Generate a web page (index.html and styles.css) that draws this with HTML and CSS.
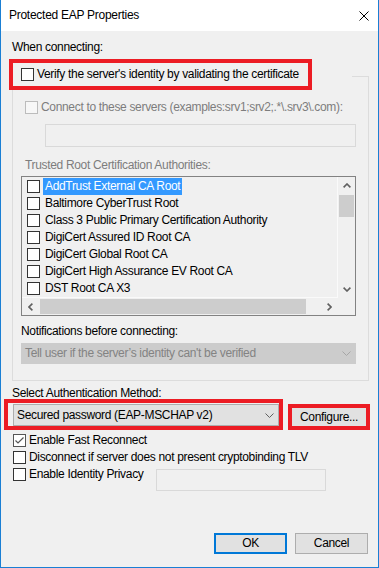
FILE: index.html
```html
<!DOCTYPE html>
<html lang="en">
<head>
<meta charset="utf-8">
<title>Protected EAP Properties</title>
<link rel="stylesheet" href="styles.css">
</head>
<body>
<div class="window">
  <div class="titlebar">
    <span class="title">Protected EAP Properties</span>
    <svg class="close" width="10" height="10" viewBox="0 0 10 10"><path d="M0.5 0.5L9.5 9.5M9.5 0.5L0.5 9.5" fill="none" stroke="#000" stroke-width="1"/></svg>
  </div>
  <div class="client">
    <div class="label">When connecting:</div>
    <div class="group">
      <div class="group-head">
        <div class="mark mark-verify">
          <span class="cb"></span><span class="txt">Verify the server's identity by validating the certificate</span>
        </div>
      </div>
      <div class="row connect disabled"><span class="cb cb-dis"></span><span class="txt">Connect to these servers (examples:srv1;srv2;.*\.srv3\.com):</span></div>
      <div class="textbox servers"></div>
      <div class="label disabled trusted">Trusted Root Certification Authorities:</div>
      <div class="listbox">
        <div class="list-rows">
          <div class="item"><span class="cb"></span><span class="item-text selected">AddTrust External CA Root</span></div>
          <div class="item"><span class="cb"></span><span class="item-text">Baltimore CyberTrust Root</span></div>
          <div class="item"><span class="cb"></span><span class="item-text">Class 3 Public Primary Certification Authority</span></div>
          <div class="item"><span class="cb"></span><span class="item-text">DigiCert Assured ID Root CA</span></div>
          <div class="item"><span class="cb"></span><span class="item-text">DigiCert Global Root CA</span></div>
          <div class="item"><span class="cb"></span><span class="item-text">DigiCert High Assurance EV Root CA</span></div>
          <div class="item"><span class="cb"></span><span class="item-text">DST Root CA X3</span></div>
        </div>
        <div class="vscroll">
          <div class="arrow"><svg width="8" height="5" viewBox="0 0 8 5"><path d="M0.6 4.4L4 1L7.4 4.4" fill="none" stroke="#606060" stroke-width="1.6"/></svg></div>
          <div class="vthumb"></div>
          <div class="spacer"></div>
          <div class="arrow"><svg width="8" height="5" viewBox="0 0 8 5"><path d="M0.6 0.6L4 4L7.4 0.6" fill="none" stroke="#606060" stroke-width="1.6"/></svg></div>
        </div>
        <div class="hscroll">
          <div class="arrow"><svg width="5" height="8" viewBox="0 0 5 8"><path d="M4.4 0.6L1 4L4.4 7.4" fill="none" stroke="#606060" stroke-width="1.6"/></svg></div>
          <div class="hthumb"></div>
          <div class="spacer"></div>
          <div class="arrow"><svg width="5" height="8" viewBox="0 0 5 8"><path d="M0.6 0.6L4 4L0.6 7.4" fill="none" stroke="#606060" stroke-width="1.6"/></svg></div>
        </div>
        <div class="corner"></div>
      </div>
      <div class="label notif">Notifications before connecting:</div>
      <div class="combo combo-dis">
        <span class="txt">Tell user if the server’s identity can't be verified</span>
        <svg width="9" height="5" viewBox="0 0 9 5"><path d="M0.5 0.5L4.5 4.5L8.5 0.5" fill="none" stroke="#a6a6a6" stroke-width="1"/></svg>
      </div>
    </div>
    <div class="label auth-label">Select Authentication Method:</div>
    <div class="auth-row">
      <div class="mark mark-method">
        <div class="combo combo-auth">
          <span class="txt">Secured password (EAP-MSCHAP v2)</span>
          <svg width="9" height="5" viewBox="0 0 9 5"><path d="M0.5 0.5L4.5 4.5L8.5 0.5" fill="none" stroke="#606060" stroke-width="1"/></svg>
        </div>
      </div>
      <div class="mark mark-config">
        <div class="btn-config">Configure...</div>
      </div>
    </div>
    <div class="checks">
      <div class="crow"><span class="cb cb-checked"><svg width="11" height="11" viewBox="0 0 11 11"><path d="M1.5 5.5L4 8L9.5 2.5" fill="none" stroke="#555" stroke-width="1.2"/></svg></span><span class="txt">Enable Fast Reconnect</span></div>
      <div class="crow"><span class="cb"></span><span class="txt">Disconnect if server does not present cryptobinding TLV</span></div>
      <div class="crow crow-privacy">
        <span class="crow-label"><span class="cb"></span><span class="txt">Enable Identity Privacy</span></span>
        <span class="textbox identity"></span>
      </div>
    </div>
    <div class="buttons">
      <div class="btn btn-ok">OK</div>
      <div class="btn">Cancel</div>
    </div>
  </div>
</div>
</body>
</html>
```
FILE: styles.css
```css
* { box-sizing: border-box; }
html, body { margin: 0; padding: 0; background: #fff; }
body {
  font-family: "Liberation Sans", Arial, sans-serif;
  font-size: 12px;
  line-height: 15px;
  letter-spacing: -0.33px;
  color: #000;
}
.window {
  width: 379px;
  height: 568px;
  border: 1px solid #1a7fd4;
  border-top: none;
  display: flex;
  flex-direction: column;
  background: #f0f0f0;
}
.titlebar {
  height: 31px;
  flex: none;
  background: #fff;
  display: flex;
  align-items: center;
  justify-content: space-between;
  padding: 0 9px 0 8px;
}
.title { white-space: nowrap; letter-spacing: -0.27px; }
.close { display: block; }
.client {
  flex: 1;
  display: flex;
  flex-direction: column;
  padding: 9px 9px 13px 11px;
}
.label { height: 15px; white-space: nowrap; }
.disabled { color: #7d7d7d; }
.txt { white-space: nowrap; }

.cb {
  width: 13px;
  height: 13px;
  flex: none;
  border: 1px solid #333;
  background: #fff;
  display: flex;
  align-items: center;
  justify-content: center;
}
.cb-dis { border-color: #bcbcbc; background: #f7f7f7; }
.cb-checked { border-color: #555; }
.cb svg { display: block; }

.group {
  margin-top: 21px;
  width: 357px;
  border: 1px solid #dcdcdc;
  padding: 0 12px 16px 8px;
}
.group-head {
  width: 343px;
  height: 31px;
  margin: -18px 0 0 -12px;
  background: #f0f0f0;
  display: flex;
}
.mark { border: 4px solid #ec1c24; flex: none; }
.mark-verify {
  width: 303px;
  height: 31px;
  display: flex;
  align-items: center;
  gap: 3px;
  padding-left: 8px;
}
.row { display: flex; align-items: center; gap: 3px; height: 15px; }
.connect { margin: 10px 0 0 4px; }
.textbox { border: 1px solid #d9d9d9; background: #f0f0f0; }
.servers { margin: 9px 0 0 24px; width: 311px; height: 23px; }
.trusted { margin: 11px 0 0 4px; }

.listbox {
  margin-top: 3px;
  width: 335px;
  height: 140px;
  border: 1px solid #828282;
  display: grid;
  grid-template-columns: 1fr 17px;
  grid-template-rows: 1fr 17px;
}
.list-rows {
  padding-top: 1px;
  border-right: 1px solid #fafafa;
  border-bottom: 1px solid #fafafa;
  overflow: hidden;
}
.item { height: 17px; display: flex; align-items: center; padding-left: 5px; }
.item-text { margin-left: 3px; padding: 0 2px; line-height: 17px; white-space: nowrap; }
.selected { background: #3399ff; color: #fff; }
.vscroll { display: flex; flex-direction: column; }
.arrow { width: 17px; height: 17px; flex: none; display: flex; align-items: center; justify-content: center; }
.arrow svg { display: block; }
.vthumb { margin: 1px 1px 0; height: 22px; background: #cdcdcd; }
.spacer { flex: 1; }
.hscroll { display: flex; }
.hthumb { margin: 1px 0 1px 1px; width: 266px; background: #cdcdcd; }
.corner { background: #f0f0f0; }

.notif { margin-top: 8px; }
.combo {
  display: flex;
  align-items: center;
  justify-content: space-between;
  white-space: nowrap;
}
.combo svg { display: block; flex: none; }
.combo-dis {
  margin-top: 4px;
  height: 21px;
  border: 1px solid #cccccc;
  background: #cccccc;
  color: #838383;
  padding: 0 4px 0 3px;
}

.auth-label { margin-top: 5px; }
.auth-row { display: flex; align-items: flex-start; margin: -2px 0 0 -8px; }
.mark-method { width: 279px; height: 31px; padding: 1px 0 0 5px; }
.combo-auth {
  width: 266px;
  height: 22px;
  border: 1px solid #adadad;
  background: #e1e1e1;
  padding: 0 4px 0 3px;
}
.mark-config { margin: 5px 0 0 5px; width: 82px; height: 26px; }
.btn-config {
  height: 100%;
  background: #e1e1e1;
  display: flex;
  align-items: center;
  justify-content: center;
  white-space: nowrap;
}

.checks { margin: 2px 0 0 1px; }
.crow { display: flex; align-items: center; gap: 3px; height: 17px; }
.crow-privacy { align-items: flex-start; gap: 0; }
.crow-label { display: flex; align-items: center; gap: 3px; height: 17px; width: 143px; }
.identity { margin-top: 3px; width: 170px; height: 22px; }

.buttons {
  margin-top: auto;
  margin-right: 1px;
  display: flex;
  justify-content: flex-end;
  gap: 8px;
}
.btn {
  width: 73px;
  height: 21px;
  border: 1px solid #adadad;
  background: #e1e1e1;
  display: flex;
  align-items: center;
  justify-content: center;
}
.btn-ok { border: 2px solid #0078d7; }
```
